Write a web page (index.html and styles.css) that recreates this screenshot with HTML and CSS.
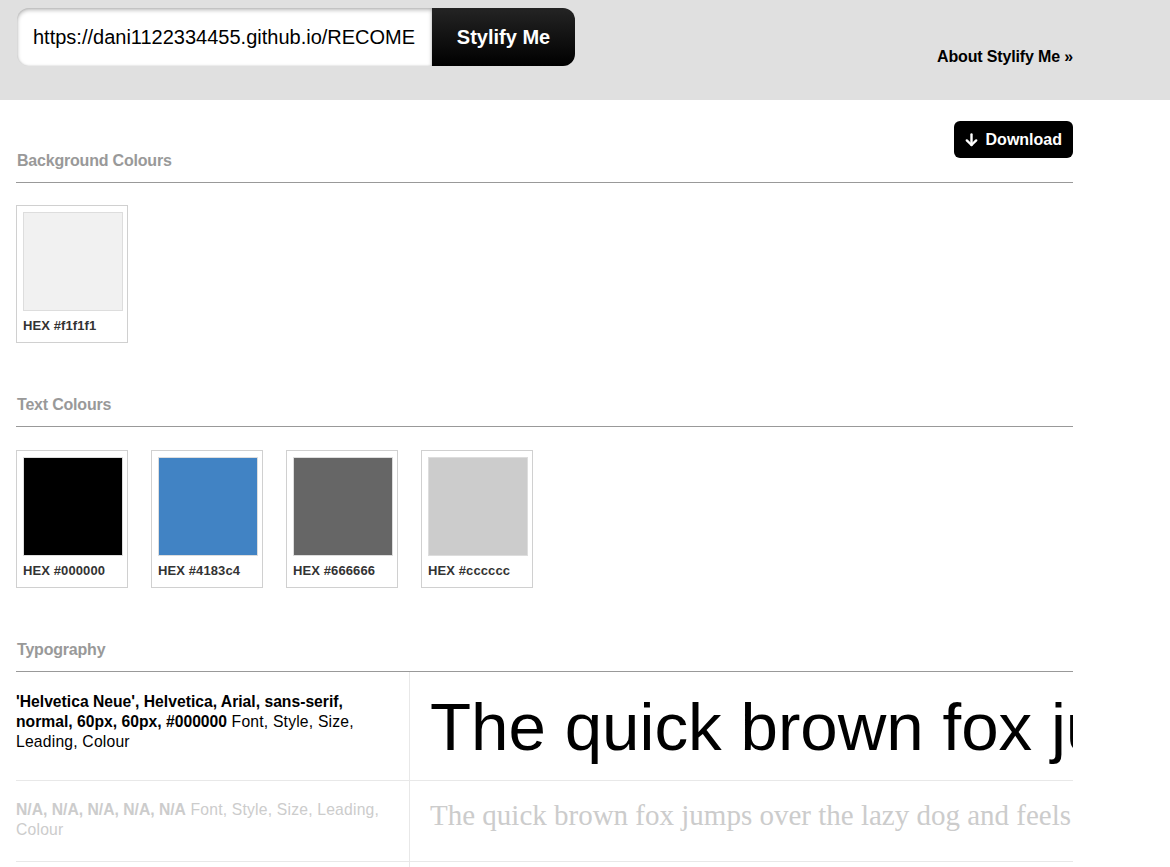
FILE: index.html
```html
<!DOCTYPE html>
<html lang="en">
<head>
<meta charset="utf-8">
<title>Stylify Me</title>
<link rel="stylesheet" href="styles.css">
</head>
<body>
<header class="topbar">
  <div class="topbar-inner">
    <form class="url-form">
      <input class="url-input" type="text" value="https://dani1122334455.github.io/RECOMENDADOR/">
      <button class="url-submit" type="button">Stylify Me</button>
    </form>
    <a class="about-link" href="#">About Stylify Me &raquo;</a>
  </div>
</header>

<main class="content">
  <section class="section section-bg">
    <div class="section-head">
      <h2 class="section-title">Background Colours</h2>
      <a class="download-btn" href="#">
        <svg class="dl-icon" width="13" height="14" viewBox="0 0 13 14" aria-hidden="true">
          <path d="M6.5 1.5 V12" stroke="#fff" stroke-width="2.4" fill="none" stroke-linecap="round"/>
          <path d="M1.8 7.4 L6.5 12 L11.2 7.4" stroke="#fff" stroke-width="2.4" fill="none" stroke-linecap="round" stroke-linejoin="round"/>
        </svg>
        <span>Download</span>
      </a>
    </div>
    <div class="swatches">
      <div class="swatch">
        <div class="swatch-color c-f1f1f1"></div>
        <div class="swatch-label">HEX #f1f1f1</div>
      </div>
    </div>
  </section>

  <section class="section">
    <div class="section-head">
      <h2 class="section-title">Text Colours</h2>
    </div>
    <div class="swatches">
      <div class="swatch">
        <div class="swatch-color c-000000"></div>
        <div class="swatch-label">HEX #000000</div>
      </div>
      <div class="swatch">
        <div class="swatch-color c-4183c4"></div>
        <div class="swatch-label">HEX #4183c4</div>
      </div>
      <div class="swatch">
        <div class="swatch-color c-666666"></div>
        <div class="swatch-label">HEX #666666</div>
      </div>
      <div class="swatch">
        <div class="swatch-color c-cccccc"></div>
        <div class="swatch-label">HEX #cccccc</div>
      </div>
    </div>
  </section>

  <section class="section">
    <div class="section-head">
      <h2 class="section-title">Typography</h2>
    </div>
    <div class="type-table">
      <div class="type-row row-h1">
        <div class="type-info"><strong>'Helvetica Neue', Helvetica, Arial, sans-serif, normal, 60px, 60px, #000000</strong> Font, Style, Size, Leading, Colour</div>
        <div class="type-sample sample-h1">The quick brown fox jumps over the lazy dog and feels</div>
      </div>
      <div class="type-row row-na">
        <div class="type-info muted"><strong>N/A, N/A, N/A, N/A, N/A</strong> Font, Style, Size, Leading, Colour</div>
        <div class="type-sample sample-serif">The quick brown fox jumps over the lazy dog and feels good</div>
      </div>
      <div class="type-row row-na">
        <div class="type-info muted"><strong>N/A, N/A, N/A, N/A, N/A</strong> Font, Style, Size, Leading, Colour</div>
        <div class="type-sample sample-serif">The quick brown fox jumps over the lazy dog and feels good</div>
      </div>
    </div>
  </section>
</main>
</body>
</html>
```

FILE: styles.css
```css
* {
  box-sizing: border-box;
}

body {
  margin: 0;
  background: #fff;
  font-family: "Liberation Sans", Arial, sans-serif;
  color: #000;
}

.topbar {
  background: #e0e0e0;
  height: 100px;
}

.topbar-inner {
  width: 1073px;
  padding-left: 17px;
  padding-top: 8px;
  display: flex;
  justify-content: space-between;
  align-items: flex-start;
}

.url-form {
  display: flex;
  height: 58px;
}

.url-input {
  width: 415px;
  height: 58px;
  border: none;
  border-radius: 12px 0 0 12px;
  padding: 0 17px 0 16px;
  font-family: "Liberation Sans", Arial, sans-serif;
  font-size: 20px;
  color: #000;
  background: #fff;
  box-shadow: inset 0 2px 4px rgba(0, 0, 0, 0.28), inset 0 0 2px rgba(0, 0, 0, 0.15);
  outline: none;
}

.url-submit {
  width: 143px;
  height: 58px;
  border: none;
  border-radius: 0 12px 12px 0;
  background: linear-gradient(to bottom, #242424, #000);
  color: #fff;
  font-family: "Liberation Sans", Arial, sans-serif;
  font-weight: bold;
  font-size: 20px;
  padding: 0;
  cursor: pointer;
}

.about-link {
  margin-top: 39px;
  font-size: 16px;
  font-weight: bold;
  letter-spacing: -0.15px;
  color: #000;
  text-decoration: none;
  line-height: 20px;
}

.content {
  width: 1089px;
  padding: 0 16px;
}

.section-head {
  display: flex;
  justify-content: space-between;
  align-items: flex-end;
  border-bottom: 1px solid #999;
  margin-top: 51px;
}

.section-bg .section-head {
  margin-top: 0;
  padding-top: 21px;
}

.section-title {
  margin: 0 0 10px 1px;
  font-size: 16px;
  line-height: 22px;
  font-weight: bold;
  letter-spacing: -0.2px;
  color: #999;
}

.download-btn {
  display: flex;
  align-items: center;
  gap: 8px;
  height: 37px;
  padding: 0 11px 0 11px;
  margin-bottom: 24px;
  background: #000;
  color: #fff;
  border-radius: 6px;
  font-size: 16px;
  font-weight: bold;
  text-decoration: none;
}

.dl-icon {
  display: block;
}

.swatches {
  display: flex;
  gap: 23px;
  margin-top: 23px;
}

.section-bg .swatches {
  margin-top: 22px;
}

.swatch {
  width: 112px;
  height: 138px;
  border: 1px solid #d0d0d0;
  padding: 6px;
}

.swatch-color {
  width: 100px;
  height: 99px;
  border: 1px solid #ddd;
}

.c-f1f1f1 { background: #f1f1f1; }
.c-000000 { background: #000000; }
.c-4183c4 { background: #4183c4; }
.c-666666 { background: #666666; }
.c-cccccc { background: #cccccc; }

.swatch-label {
  margin-top: 7px;
  font-size: 13px;
  line-height: 15px;
  font-weight: bold;
  letter-spacing: 0.1px;
  color: #333;
}

.type-table {
  display: flex;
  flex-direction: column;
}

.type-row {
  display: grid;
  grid-template-columns: 394px 1fr;
  border-bottom: 1px solid #e8e8e8;
}

.type-info {
  border-right: 1px solid #e8e8e8;
  padding: 20px 11px 28px 0;
  font-size: 15.7px;
  line-height: 20px;
  letter-spacing: 0.2px;
  color: #000;
}

.type-info strong {
  letter-spacing: 0;
}

.row-na .type-info {
  padding: 19px 11px 21px 0;
}

.type-info.muted {
  color: #ccc;
}

.type-sample {
  padding-left: 20px;
  white-space: nowrap;
  overflow: hidden;
}

.sample-h1 {
  font-family: "Liberation Sans", Arial, sans-serif;
  font-size: 67.3px;
  line-height: 60px;
  padding-top: 25px;
  color: #000;
}

.sample-serif {
  font-family: "Liberation Serif", "Times New Roman", serif;
  font-size: 29px;
  line-height: 36px;
  padding-top: 16px;
  color: #ccc;
}
```
